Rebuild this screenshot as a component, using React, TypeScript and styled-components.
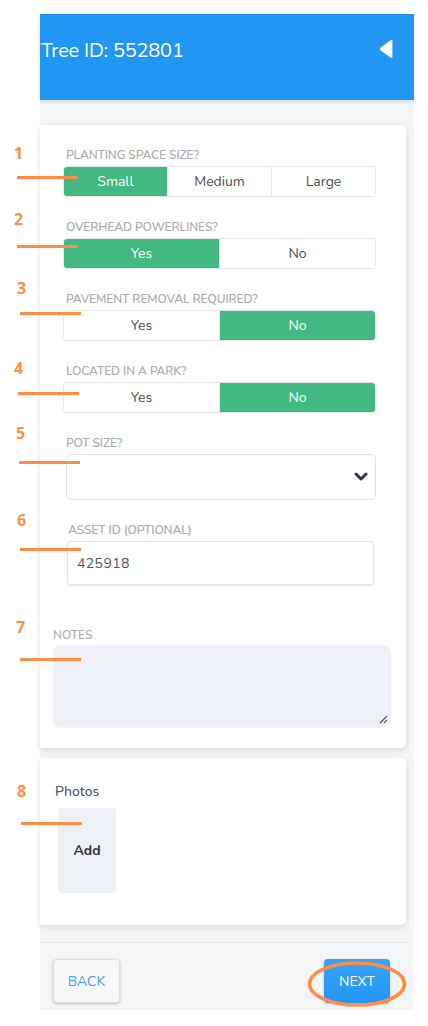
import * as React from 'react'
import styled, { createGlobalStyle } from 'styled-components'

const GlobalStyle = createGlobalStyle`
  html, body { margin: 0; padding: 0; background: #ffffff; }
  body { font-family: Nunito, Lato, "Noto Sans", sans-serif; -webkit-font-smoothing: antialiased; }
  * { box-sizing: border-box; }
`

const GREEN = '#42b883'
const ORANGE = '#ff8d45'

type Choice = { label: string; on?: boolean }

const fields: { label: string; choices: Choice[] }[] = [
  { label: 'Planting space size?', choices: [{ label: 'Small', on: true }, { label: 'Medium' }, { label: 'Large' }] },
  { label: 'Overhead powerlines?', choices: [{ label: 'Yes', on: true }, { label: 'No' }] },
  { label: 'Pavement removal required?', choices: [{ label: 'Yes' }, { label: 'No', on: true }] },
  { label: 'Located in a park?', choices: [{ label: 'Yes' }, { label: 'No', on: true }] },
]

// annotation marks drawn over the screenshot
const marks = [
  { n: 1, nx: 14, ny: 145, lx: 17, ly: 176 },
  { n: 2, nx: 14, ny: 211, lx: 17, ly: 245 },
  { n: 3, nx: 17, ny: 280, lx: 20, ly: 312 },
  { n: 4, nx: 14, ny: 360, lx: 18, ly: 392 },
  { n: 5, nx: 16, ny: 425, lx: 19, ly: 461 },
  { n: 6, nx: 17, ny: 512, lx: 20, ly: 548 },
  { n: 7, nx: 16, ny: 619, lx: 20, ly: 658 },
  { n: 8, nx: 17, ny: 783, lx: 21, ly: 822 },
]

export default function App() {
  return (
    <Page>
      <GlobalStyle />
      <Frame>
        <Header>
          <Title>Tree ID: 552801</Title>
          <svg width="14" height="20" viewBox="0 0 14 20">
            <path d="M11.8 1.2 L1.6 8.6 Q0.4 10 1.6 11.4 L11.8 18.8 Q13.4 19.8 13.4 17.8 L13.4 2.2 Q13.4 0.2 11.8 1.2 Z" fill="#fff" />
          </svg>
        </Header>

        <Content>
          <Card>
            <FormGroup>
              {fields.map((f) => (
                <Field key={f.label}>
                  <Label>{f.label}</Label>
                  <Segmented>
                    {f.choices.map((c) => (
                      <Segment key={c.label} $on={!!c.on}>{c.label}</Segment>
                    ))}
                  </Segmented>
                </Field>
              ))}

              <Field>
                <Label $indent={3}>Pot size?</Label>
                <Select>
                  <svg width="14" height="10" viewBox="0 0 14 10">
                    <path d="M2 2 L7 7 L12 2" fill="none" stroke="#2e3352" strokeWidth="3" strokeLinecap="round" strokeLinejoin="round" />
                  </svg>
                </Select>
              </Field>

              <Field>
                <Label $indent={5}>Asset ID (optional)</Label>
                <Input>425918</Input>
              </Field>
            </FormGroup>

            <NotesLabel>Notes</NotesLabel>
            <Notes>
              <svg width="9" height="9" viewBox="0 0 9 9">
                <path d="M8 1 L1 8 M8 5 L5 8" stroke="#555" strokeWidth="1.2" />
              </svg>
            </Notes>
          </Card>

          <Card $photos>
            <PhotosTitle>Photos</PhotosTitle>
            <AddTile>Add</AddTile>
          </Card>

          <Footer>
            <BackButton>BACK</BackButton>
            <NextButton>NEXT</NextButton>
          </Footer>
        </Content>
      </Frame>

      {marks.map((m) => (
        <React.Fragment key={m.n}>
          <MarkNumber style={{ left: m.nx, top: m.ny }}>{m.n}</MarkNumber>
          <MarkLine style={{ left: m.lx, top: m.ly }} />
        </React.Fragment>
      ))}
      <Ring width="102" height="48" viewBox="0 0 102 48">
        <ellipse cx="51" cy="24" rx="47.5" ry="21" fill="none" stroke={ORANGE} strokeWidth="3.5" />
      </Ring>
    </Page>
  )
}

const Page = styled.div`
  position: relative;
  width: 428px;
  height: 1026px;
  padding: 14px 0 0 40px;
  background: #fff;
`

const Frame = styled.div`
  width: 374px;
  height: 996px;
  background: #f4f5f7;
  display: flex;
  flex-direction: column;
`

const Header = styled.div`
  height: 86px;
  background: #2196f3;
  display: flex;
  align-items: flex-start;
  justify-content: space-between;
  padding: 25px 21px 0 1px;
  box-shadow: 0 2px 4px rgba(0, 0, 0, 0.12);
  position: relative;
  z-index: 1;
`

const Title = styled.div`
  color: #fff;
  font-size: 20px;
  line-height: 24px;
  letter-spacing: -0.2px;
`

const Content = styled.div`
  padding: 25px 8px 0 0;
  display: flex;
  flex-direction: column;
  gap: 10px;
`

const Card = styled.div<{ $photos?: boolean }>`
  background: #fff;
  border-radius: 0 5px 5px 0;
  box-shadow: 0 2px 6px rgba(0, 0, 0, 0.12);
  padding: ${(p) => (p.$photos ? '24px 15px 32px 15px' : '23px 15px 21px 13px')};
`

const FormGroup = styled.div`
  padding: 0 15px 0 10px;
  display: flex;
  flex-direction: column;
  gap: 23px;
`

const Field = styled.div`
  display: flex;
  flex-direction: column;
`

const Label = styled.div<{ $indent?: number }>`
  font-size: 12px;
  line-height: 14px;
  font-weight: 600;
  color: #adadad;
  text-transform: uppercase;
  margin: 0 0 4px ${(p) => p.$indent ?? 3}px;
  letter-spacing: -0.1px;
`

const Segmented = styled.div`
  display: flex;
  height: 31px;
  border: 1px solid #e6e8ec;
  border-radius: 4px;
  overflow: hidden;
`

const Segment = styled.div<{ $on: boolean }>`
  flex: 1;
  display: flex;
  align-items: center;
  justify-content: center;
  font-size: 14px;
  color: ${(p) => (p.$on ? '#fff' : '#4d4d4d')};
  background: ${(p) => (p.$on ? GREEN : '#fff')};
  & + & { border-left: 1px solid #e6e8ec; }
`

const Select = styled.div`
  margin-left: 3px;
  height: 46px;
  border: 1px solid #dfe4ec;
  border-radius: 5px;
  background: #fff;
  display: flex;
  align-items: center;
  justify-content: flex-end;
  padding-right: 7px;
`

const Input = styled.div`
  margin: 0 2px 0 4px;
  height: 44px;
  border: 1px solid #e2e5ea;
  border-radius: 3px;
  box-shadow: 0 1px 2px rgba(0, 0, 0, 0.1);
  display: flex;
  align-items: center;
  padding-left: 9px;
  font-size: 14px;
  color: #555;
  letter-spacing: 0.4px;
`

const NotesLabel = styled.div`
  margin: 43px 0 3px 0;
  font-size: 12px;
  line-height: 14px;
  font-weight: 600;
  color: #adadad;
  text-transform: uppercase;
`

const Notes = styled.div`
  height: 82px;
  background: #edf1f5;
  border-radius: 8px;
  box-shadow: 0 1px 2px rgba(0, 0, 0, 0.05);
  display: flex;
  align-items: flex-end;
  justify-content: flex-end;
  padding: 0 3px 3px 0;
`

const PhotosTitle = styled.div`
  font-size: 14px;
  line-height: 20px;
  font-weight: 500;
  color: #4a5568;
`

const AddTile = styled.div`
  margin: 6px 0 0 3px;
  width: 58px;
  height: 85px;
  background: #edf1f5;
  border-radius: 4px;
  display: flex;
  align-items: center;
  justify-content: center;
  font-size: 14px;
  font-weight: 700;
  color: #333;
`

const Footer = styled.div`
  margin-top: 7px;
  border-top: 1px solid #e3e5e8;
  padding: 16px 16px 0 13px;
  display: flex;
  justify-content: space-between;
`

const BackButton = styled.div`
  width: 67px;
  height: 44px;
  border-radius: 4px;
  background: #f6f7f9;
  border: 1px solid #dedfe2;
  box-shadow: 0 1px 3px rgba(0, 0, 0, 0.22);
  display: flex;
  align-items: center;
  justify-content: center;
  font-size: 14px;
  color: #4a9cf0;
`

const NextButton = styled.div`
  width: 66px;
  height: 44px;
  border-radius: 4px;
  background: linear-gradient(#3ba3f6, #2196f3);
  box-shadow: 0 1px 3px rgba(0, 0, 0, 0.22);
  display: flex;
  align-items: center;
  justify-content: center;
  font-size: 14px;
  color: #fff;
`

const MarkNumber = styled.div`
  position: absolute;
  font-family: "Open Sans", "Liberation Sans", sans-serif;
  font-weight: 700;
  font-size: 16px;
  line-height: 16px;
  color: ${ORANGE};
`

const MarkLine = styled.div`
  position: absolute;
  width: 61px;
  height: 3px;
  background: ${ORANGE};
`

const Ring = styled.svg`
  position: absolute;
  left: 306px;
  top: 960px;
`
